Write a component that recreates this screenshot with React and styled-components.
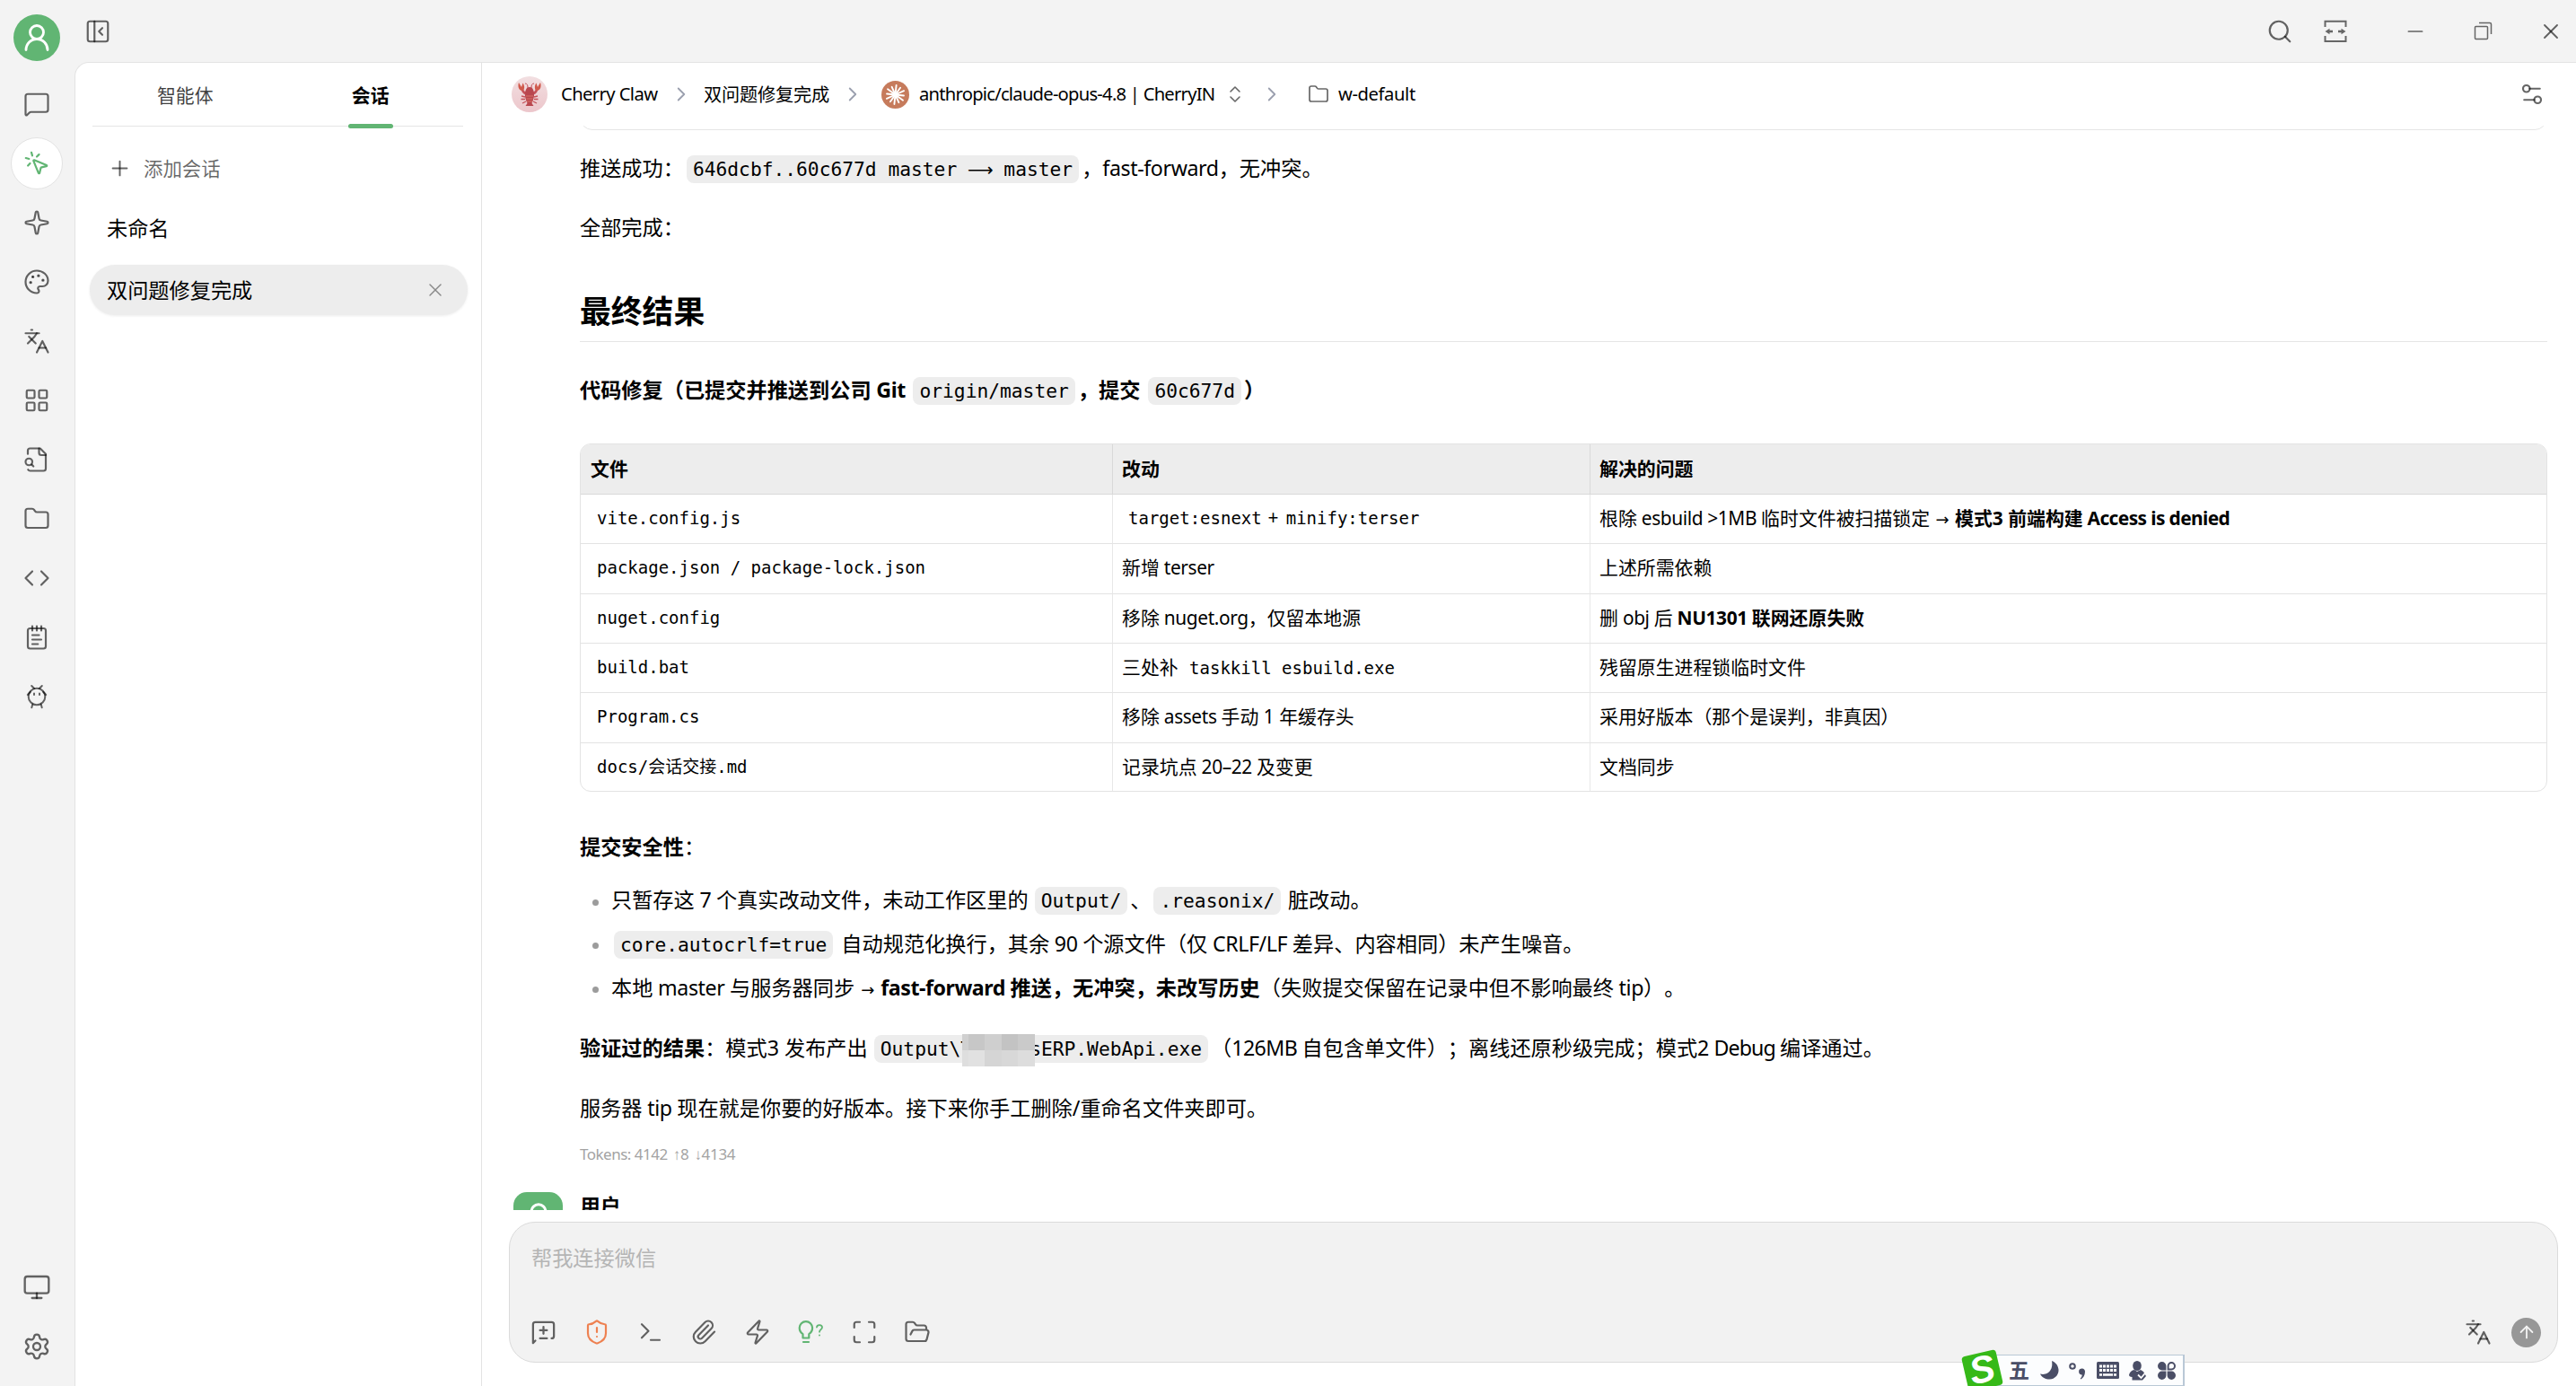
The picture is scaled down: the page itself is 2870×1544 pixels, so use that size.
import React from 'react';
import styled, { createGlobalStyle, css } from 'styled-components';
import {
  MessageSquare, MousePointerClick, Sparkle, Palette, Languages, LayoutGrid, Folder, Code,
  NotepadText, Monitor, Settings, PanelLeftClose, Search, Minus, X, Plus, ChevronRight,
  ChevronsUpDown, Settings2, ShieldAlert, Terminal, Paperclip, Zap, Maximize, FolderOpen,
  ArrowUp, UserRound,
} from 'lucide-react';

const sans = `'Noto Sans', 'Noto Sans CJK SC', sans-serif`;
const mono = `'DejaVu Sans Mono', 'Noto Sans CJK SC', monospace`;
const ink = 'rgba(0, 0, 0, 0.6)';
const green = '#61b573';

const GlobalStyle = createGlobalStyle`
  * { box-sizing: border-box; }
  body {
    margin: 0;
    background: #f3f3f3;
    color: #000;
    font-family: ${sans};
    font-size: 23.2px;
    text-spacing-trim: space-all;
    overflow: hidden;
  }
  svg { display: block; flex: none; }
`;

/* ---------- shell ---------- */

const Window = styled.div`
  position: relative;
  display: flex;
  width: 2870px;
  height: 1544px;
  overflow: hidden;
`;

const Rail = styled.nav`
  display: flex;
  flex-direction: column;
  align-items: center;
  width: 83px;
  padding: 16px 1px 7px 0;
`;

const RailAvatar = styled.div`
  display: flex;
  align-items: center;
  justify-content: center;
  width: 52px;
  height: 52px;
  margin-bottom: 19px;
  border-radius: 50%;
  background: ${green};
`;

const RailItem = styled.div`
  display: flex;
  align-items: center;
  justify-content: center;
  width: 58px;
  height: 58px;
  margin-bottom: 8px;
  border: 1px solid transparent;
  border-radius: 50%;
  ${props => props.$active && css`
    background: #fff;
    border-color: #e3e3e3;
  `}
`;

const RailSpacer = styled.div`
  flex: 1;
`;

const Workspace = styled.div`
  display: flex;
  flex-direction: column;
  flex: 1;
`;

const TitleBar = styled.header`
  display: flex;
  align-items: center;
  height: 69px;
  padding: 0 14px 0 11px;
`;

const TitleTools = styled.div`
  display: flex;
  align-items: center;
  gap: 34px;
  margin-left: auto;
`;

const WindowButtons = styled.div`
  display: grid;
  grid-template-columns: repeat(3, 28px);
  gap: 47.5px;
  place-items: center;
  margin-left: 28px;
`;

const Panel = styled.div`
  display: flex;
  flex: 1;
  border-top: 1px solid #e3e3e3;
  border-left: 1px solid #e3e3e3;
  border-top-left-radius: 16px;
  background: #fff;
  overflow: hidden;
`;

// nudges a label onto the optical centre of the icon beside it
const Label = styled.span`
  padding-bottom: 2px;
  letter-spacing: ${props => props.$ls || 0}px;
`;

/* ---------- session list ---------- */

const Sessions = styled.aside`
  display: flex;
  flex-direction: column;
  width: 453px;
  border-right: 1px solid #e3e3e3;
`;

const Tabs = styled.div`
  display: flex;
  height: 71px;
  margin: 0 20px 0 19px;
  border-bottom: 1px solid #e5e5e5;
`;

const Tab = styled.div`
  position: relative;
  display: flex;
  flex: 1;
  align-items: center;
  justify-content: center;
  font-size: 20.9px;
  color: ${props => (props.$active ? '#000' : 'rgba(0, 0, 0, 0.75)')};
  font-weight: ${props => (props.$active ? 700 : 400)};
  ${props => props.$active && css`
    &::after {
      content: '';
      position: absolute;
      bottom: -3px;
      width: 50px;
      height: 5px;
      border-radius: 3px;
      background: ${green};
    }
  `}
`;

const AddSession = styled.div`
  display: flex;
  align-items: center;
  gap: 13px;
  height: 56px;
  margin-top: 18px;
  padding-left: 36px;
  font-size: 21.4px;
  color: ${ink};
`;

const Session = styled.div`
  display: flex;
  align-items: center;
  justify-content: space-between;
  height: 56px;
  margin: ${props => props.$top}px 15px 0 16px;
  padding: 0 24px 0 19px;
  border-radius: 28px;
  ${props => props.$active && css`
    background: #ededed;
    box-shadow: 0 1px 3px rgba(0, 0, 0, 0.08);
  `}
`;

/* ---------- chat ---------- */

const Chat = styled.main`
  display: flex;
  flex-direction: column;
  flex: 1;
`;

const ChatHeader = styled.div`
  display: flex;
  align-items: center;
  height: 70px;
  padding: 0 34px 0 33px;
  font-size: 20.2px;
`;

const Crumb = styled.div`
  display: flex;
  align-items: center;
  white-space: nowrap;
  width: ${props => props.$w}px;
  gap: ${props => props.$gap || 0}px;
`;

const AgentAvatar = styled.div`
  display: flex;
  align-items: center;
  justify-content: center;
  width: 40px;
  height: 40px;
  border-radius: 50%;
  background: linear-gradient(#f2dfe1, #ecc6cb);
`;

const HeaderEnd = styled.div`
  margin-left: auto;
`;

const Messages = styled.div`
  height: 1208px;
  padding: 0 32px 0 109px;
  overflow: hidden;
`;

const PreviousBlock = styled.div`
  height: 40px;
  margin-top: -35px;
  border: 1px solid #e5e5e5;
  border-radius: 14px;
`;

const Para = styled.p`
  height: 38px;
  margin: ${props => props.$top}px 0 0;
  line-height: 38px;
  white-space: nowrap;
  font-weight: ${props => (props.$bold ? 700 : 400)};
`;

const Heading = styled.h2`
  height: 58px;
  margin: 51px 0 0;
  border-bottom: 1px solid #e5e5e5;
  font-size: 34.8px;
  line-height: 47px;
`;

// Latin runs are tracked separately from the CJK text around them
const En = styled.span`
  letter-spacing: ${props => props.$ls ?? -0.4}px;
`;

const Mono = styled.code`
  padding: 3px 7px;
  margin: 0 3px;
  border-radius: 8px;
  background: #ededed;
  font-family: ${mono};
  font-size: 21.26px;
  font-weight: 400;
`;

const LongArrow = styled.span`
  display: inline-flex;
  justify-content: center;
  width: 26.6px;
  font-family: 'DejaVu Sans', sans-serif;
  font-size: 20px;
  line-height: 20px;
`;

const Arrow = styled.span`
  display: inline-block;
  width: 17px;
  font-family: 'DejaVu Sans', sans-serif;
  font-size: 18px;
  font-weight: 400;
  line-height: 20px;
  text-align: center;
`;

const Table = styled.div`
  display: grid;
  grid-template-columns: 593px 532px 1fr;
  grid-template-rows: 56px repeat(6, 55.33px);
  height: 388px;
  margin-top: 41px;
  border: 1px solid #e3e3e3;
  border-radius: 12px;
  overflow: hidden;
`;

const Cell = styled.div`
  display: flex;
  align-items: center;
  padding: 0 0 4px ${props => (props.$col ? 10 : 11)}px;
  border-right: ${props => (props.$col === 2 ? 'none' : '1px solid #e8e8e8')};
  border-bottom: ${props => (props.$lastRow ? 'none' : '1px solid #e3e3e3')};
  font-size: 20.9px;
  white-space: pre;
  ${props => props.$head && css`
    background: #ededed;
    border-color: #d9d9d9;
    font-weight: 700;
  `}
`;

const CellMono = styled.code`
  padding-left: ${props => (props.$flush ? 0 : 7)}px;
  font-family: ${mono};
  font-size: 19px;
`;

const List = styled.ul`
  display: flex;
  flex-direction: column;
  gap: 10.7px;
  margin: 22px 0 0;
  padding: 0;
  list-style: none;
`;

const Item = styled.li`
  display: flex;
  align-items: center;
  height: 38px;
  line-height: 38px;
  white-space: pre;
  &::before {
    content: '';
    flex: none;
    width: 7px;
    height: 7px;
    margin: 4px 14px 0;
    border-radius: 50%;
    background: #9c9c9c;
  }
`;

const Redacted = styled.span`
  position: relative;
  display: inline-block;
  width: 64px;
  height: 20px;
  vertical-align: middle;
`;

const Mosaic = styled.span`
  position: absolute;
  left: -11px;
  top: -8px;
  display: grid;
  grid-template-columns: 7px 18px 19px 18px 19px;
  grid-template-rows: 18px 18px;
`;

const MosaicCell = styled.i`
  background: ${props => props.$c};
`;

const Tokens = styled.div`
  display: flex;
  gap: 6px;
  height: 26px;
  margin-top: 20px;
  font-size: 17px;
  line-height: 26px;
  color: #a3a3a3;
`;

const TokenArrow = styled.span`
  font-family: 'Liberation Sans', sans-serif;
`;

const NextMessage = styled.div`
  display: flex;
  gap: 19px;
  margin: 29px 0 0 -74px;
  font-size: 22.8px;
  font-weight: 700;
  line-height: 32px;
`;

const MessageAvatar = styled.div`
  display: flex;
  justify-content: center;
  width: 55px;
  height: 55px;
  padding-top: 9px;
  border-radius: 15px;
  background: ${green};
`;

/* ---------- composer ---------- */

const Composer = styled.div`
  display: flex;
  flex-direction: column;
  justify-content: space-between;
  height: 157px;
  margin: 13px 20px 0 30px;
  padding: 19px 18px 17px 24px;
  border: 1px solid #dbdbdb;
  border-radius: 29px;
  background: #f2f2f2;
`;

const Placeholder = styled.div`
  line-height: 40px;
  color: #b5b5b5;
`;

const Tools = styled.div`
  display: flex;
  align-items: center;
  gap: 29.5px;
  height: 32px;
  margin-left: -2.5px;
`;

const SendGroup = styled.div`
  display: flex;
  align-items: center;
  gap: 22px;
  margin-left: auto;
`;

const Send = styled.div`
  display: flex;
  align-items: center;
  justify-content: center;
  width: 33px;
  height: 33px;
  border-radius: 50%;
  background: #979797;
`;

/* ---------- input method bar floating above the window ---------- */

const ImeBar = styled.div`
  position: absolute;
  left: 2205px;
  top: 1509px;
  display: flex;
  align-items: center;
  gap: 11.6px;
  width: 229px;
  height: 35px;
  padding-left: 33px;
  border: 1px solid #b9c8d6;
  border-width: 1px 2px 1px 0;
  background: #fcfdfe;
  color: #4a4e66;
`;

const ImeMode = styled.span`
  width: 23px;
  font-size: 23px;
  font-weight: 700;
  line-height: 28px;
  padding-bottom: 2px;
`;

const ImeLogo = styled.div`
  position: absolute;
  left: -16px;
  top: -3px;
  width: 39px;
  height: 40px;
  border-radius: 4px;
  background: #36b918;
  color: #fff;
  font: italic 700 42px/38px 'Liberation Sans', sans-serif;
  text-align: center;
  transform: rotate(-13deg);
`;

/* ---------- drawings ---------- */

const line = { fill: 'none', stroke: ink, strokeLinecap: 'round', strokeLinejoin: 'round' };

const FileLookup = () => (
  <svg width="30" height="30" viewBox="0 0 24 24" strokeWidth="1.75" {...line}>
    <path d="M14 2v4a2 2 0 0 0 2 2h4" />
    <path d="M4.268 21a2 2 0 0 0 1.727 1H18a2 2 0 0 0 2-2V7l-5-5H6a2 2 0 0 0-2 2v3" />
    <path d="m9 18-1.5-1.5" />
    <circle cx="5" cy="14" r="3" />
  </svg>
);

const ClawBot = () => (
  <svg width="30" height="30" viewBox="0 0 30 30" strokeWidth="2" {...line}>
    <circle cx="15" cy="15" r="9.3" />
    <path d="M9.2 3l3 3M20.800 3l-3 3M4.800 13l3-3.200M25.200 13l-3-3.200M10.300 23.500l-1 3.800M19.700 23.500l1 3.800" />
    <path d="M12 11.500v1.500M18 11.500v1.500" />
  </svg>
);

const ColumnWidth = () => (
  <svg width="26" height="26" viewBox="0 0 26 26" fill="none" stroke="#666" strokeWidth="2">
    <path d="M1.500 8V1.800h23V8M1.500 18v6h23v-6" />
    <path d="M4 13h6M16 13h6" strokeWidth="2.600" />
    <path d="M1.500 13l5-3.200v6.400zM24.500 13l-5-3.200v6.400z" fill="#666" stroke="none" />
  </svg>
);

const Restore = () => (
  <svg width="21" height="21" viewBox="0 0 21 21" fill="none" stroke="#666" strokeWidth="1.500">
    <rect x="1.500" y="5.500" width="14" height="14" rx="1" />
    <path d="M6 1.500h12a1.500 1.500 0 0 1 1.500 1.500v11" />
  </svg>
);

const MessageDiff = () => (
  <svg width="31" height="31" viewBox="0 0 24 24" strokeWidth="1.75" {...line}>
    <path d="m5 19-2 2V5a2 2 0 0 1 2-2h14a2 2 0 0 1 2 2v10a2 2 0 0 1-2 2" />
    <path d="M9 10h6M12 7v6M9 17h6" />
  </svg>
);

const BulbQuestion = () => (
  <svg width="30" height="30" viewBox="0 0 30 30" {...line} stroke={green} strokeWidth="2.2">
    <path d="M6.500 21.500v-4.300C4 15.500 2.700 13 2.700 10.300a7.200 7.200 0 0 1 14.400 0c0 2.700-1.300 5.200-3.800 6.900v4.300z" />
    <path d="M7 26h6" />
    <path d="M22 9.500c.3-3.400 6-3 6 .2 0 2.300-3 2.600-3 5M25 18.300v.2" strokeWidth="1.800" />
  </svg>
);

const Lobster = () => (
  <svg width="26" height="28" viewBox="0 0 26 28" fill="none" stroke="#c4525a">
    <path d="M5 8c0 4 3 5 6 6M21 8c0 4-3 5-6 6" strokeWidth="2.600" />
    <path d="M11 7c0-3-.5-5-3-5M15 7c0-3 .5-5 3-5" strokeWidth="1" />
    <path d="M8 17l-4-1M8 19.500H3.500M9 22l-4 2M18 17l4-1M18 19.500h4.500M17 22l4 2" strokeWidth="1.300" />
    <path d="M1 1c-1.500 4 0 9 4 9 3-1 2.500-6 .5-8.500L4 6zM25 1c1.500 4 0 9-4 9-3-1-2.500-6-.5-8.500L22 6z" fill="#d05a4c" stroke="none" />
    <path d="M13 6c4 0 5.500 5 5 10-.3 3-1.500 6-2.500 8l2 3h-9l2-3c-1-2-2.200-5-2.500-8C7.500 11 9 6 13 6z" fill="#b9474f" stroke="none" />
    <path d="M9 16h8M9.500 19h7M10 22h6" stroke="#da7366" strokeWidth="1" />
  </svg>
);

const Burst = () => (
  <svg width="31" height="31" viewBox="-15.500 -15.500 31 31">
    <circle r="15.500" fill="#c67b5c" />
    {[...Array(12)].map((_, i) => (
      <path key={i} d={`M0 0V${i % 2 ? -9.5 : -10.5}`} transform={`rotate(${i * 30 + 6})`} stroke="#fff" strokeWidth="1.900" strokeLinecap="round" />
    ))}
  </svg>
);

const Moon = () => (
  <svg width="21" height="21" viewBox="0 0 21 21" fill="currentColor">
    <path d="M13 0c5 2 7.500 6 7.500 10.500C20.500 16 16 20.500 10.500 20.500 6 20.500 2 18.500 0 14.500c7 2 15-3 13-14.500z" />
  </svg>
);

const Punctuation = () => (
  <svg width="19" height="21" viewBox="0 0 19 21">
    <circle cx="4" cy="6" r="2.800" fill="none" stroke="currentColor" strokeWidth="2" />
    <path d="M14.500 8.500a3.300 3.300 0 0 1 3.500 3.500c0 4-2 7-4.500 8.500l-.8-.8c1.300-1.200 2-2.500 2-4.200a3.500 3.500 0 0 1-.2-7z" fill="currentColor" />
  </svg>
);

const Keyboard = () => (
  <svg width="25" height="19" viewBox="0 0 25 19">
    <rect width="25" height="19" rx="1.500" fill="currentColor" />
    <path d="M3 5h19M3 9.500h19" stroke="#fff" strokeWidth="3" strokeDasharray="3 1" />
    <path d="M3 14.500h3M7 14.500h11M19 14.500h3" stroke="#fff" strokeWidth="2.500" />
  </svg>
);

const Person = () => (
  <svg width="20" height="22" viewBox="0 0 20 22" fill="currentColor">
    <ellipse cx="9" cy="5.500" rx="4.800" ry="5.500" />
    <path d="M6 10l3 2 4-2 3 2 3 5-4 4.500H3.500V18C1 18 0 17 0 15.500 1 12 3 10.500 6 10z" />
    <path d="M10 15.500l3.500 3.500 5-6" fill="none" stroke="#fff" strokeWidth="1.800" />
  </svg>
);

const Clover = () => (
  <svg width="20" height="20" viewBox="0 0 20 20" fill="currentColor">
    <path d="M9.400 9.400H4.700a4.700 4.700 0 1 1 4.700-4.700zM9.400 10.600v4.700a4.700 4.700 0 1 1-4.700-4.700zM10.600 10.600h4.700a4.700 4.700 0 1 1-4.700 4.700z" />
    <path d="M11.600 8.400V4.700a3.700 3.700 0 1 1 3.700 3.700z" fill="none" stroke="currentColor" strokeWidth="2" />
  </svg>
);

/* ---------- content ---------- */

const icon = { size: 30, strokeWidth: 1.75, color: ink };

const railIcons = [
  MessageSquare, MousePointerClick, Sparkle, Palette, Languages, LayoutGrid,
  FileLookup, Folder, Code, NotepadText, ClawBot,
];

const rows = [
  [
    <CellMono>vite.config.js</CellMono>,
    <><CellMono>target:esnext</CellMono><En $ls={1.4}> + </En><CellMono $flush>minify:terser</CellMono></>,
    <>根除<En> esbuild &gt;1MB </En>临时文件被扫描锁定 <Arrow>→</Arrow> <b>模式3 前端构建<En $ls={-0.6}> Access is denied</En></b></>,
  ],
  [<CellMono>package.json / package-lock.json</CellMono>, <>新增<En> terser</En></>, '上述所需依赖'],
  [
    <CellMono>nuget.config</CellMono>,
    <>移除<En> nuget.org</En>，仅留本地源</>,
    <>删<En> obj </En>后<b><En> NU1301 </En>联网还原失败</b></>,
  ],
  [<CellMono>build.bat</CellMono>, <>三处补 <CellMono>taskkill esbuild.exe</CellMono></>, '残留原生进程锁临时文件'],
  [<CellMono>Program.cs</CellMono>, <>移除<En> assets </En>手动 1 年缓存头</>, '采用好版本（那个是误判，非真因）'],
  [<CellMono>docs/会话交接.md</CellMono>, <>记录坑点<En> 20–22 </En>及变更</>, '文档同步'],
];

const mosaic = [
  '#d0d0d0', '#c7c7c7', '#cfcfcf', '#c3c3c3', '#cacaca',
  '#dedede', '#e1e1e1', '#d5d5d5', '#d8d8d8', '#dddddd',
];

const Separator = () => <ChevronRight size={26} strokeWidth={1.7} color="#9a9fae" />;

const App = () => {
  return (
    <Window>
      <GlobalStyle />

      <Rail>
        <RailAvatar><UserRound size={36} strokeWidth={1.9} color="#fff" /></RailAvatar>
        {railIcons.map((Icon, i) => (
          <RailItem key={i} $active={i === 1}>
            <Icon {...icon} color={i === 1 ? green : ink} />
          </RailItem>
        ))}
        <RailSpacer />
        <RailItem><Monitor {...icon} size={32} /></RailItem>
        <RailItem><Settings {...icon} size={32} /></RailItem>
      </Rail>

      <Workspace>
        <TitleBar>
          <PanelLeftClose {...icon} />
          <TitleTools>
            <Search {...icon} />
            <ColumnWidth />
            <WindowButtons>
              <Minus size={26} strokeWidth={1.6} color={ink} />
              <Restore />
              <X size={28} strokeWidth={1.6} color={ink} />
            </WindowButtons>
          </TitleTools>
        </TitleBar>

        <Panel>
          <Sessions>
            <Tabs>
              <Tab>智能体</Tab>
              <Tab $active>会话</Tab>
            </Tabs>
            <AddSession>
              <Plus size={27} strokeWidth={1.75} color={ink} />
              <Label>添加会话</Label>
            </AddSession>
            <Session $top={11}><Label>未命名</Label></Session>
            <Session $active $top={13}>
              <Label>双问题修复完成</Label>
              <X size={24} strokeWidth={1.4} color="#888" />
            </Session>
          </Sessions>

          <Chat>
            <ChatHeader>
              <Crumb $w={176} $gap={15}>
                <AgentAvatar><Lobster /></AgentAvatar>
                <Label $ls={-0.6}>Cherry Claw</Label>
              </Crumb>
              <Crumb $w={38}><Separator /></Crumb>
              <Crumb $w={153}><Label $ls={-0.2}>双问题修复完成</Label></Crumb>
              <Crumb $w={45}><Separator /></Crumb>
              <Crumb $w={422} $gap={11}>
                <Burst />
                <Label $ls={-0.76}>anthropic/claude-opus-4.8 | CherryIN</Label>
                <ChevronsUpDown size={24} strokeWidth={1.6} color={ink} />
              </Crumb>
              <Crumb $w={53}><Separator /></Crumb>
              <Crumb $gap={10}>
                <Folder size={24} strokeWidth={1.7} color={ink} />
                <Label $ls={-0.4}>w-default</Label>
              </Crumb>
              <HeaderEnd><Settings2 size={30} strokeWidth={1.75} color={ink} /></HeaderEnd>
            </ChatHeader>

            <Messages>
              <PreviousBlock />
              <Para $top={23}>
                推送成功：<Mono>646dcbf..60c677d master <LongArrow>⟶</LongArrow> master</Mono>，<En>fast-forward</En>，无冲突。
              </Para>
              <Para $top={28}>全部完成：</Para>
              <Heading>最终结果</Heading>
              <Para $top={34} $bold>
                代码修复（已提交并推送到公司<En> Git </En><Mono>origin/master</Mono>，提交 <Mono>60c677d</Mono>）
              </Para>

              <Table>
                {['文件', '改动', '解决的问题'].map((name, i) => (
                  <Cell key={name} $head $col={i}>{name}</Cell>
                ))}
                {rows.map((row, r) => row.map((cell, c) => (
                  <Cell key={`${r}-${c}`} $lastRow={r === 5} $col={c}>
                    <span>{cell}</span>
                  </Cell>
                )))}
              </Table>

              <Para $top={42}><b>提交安全性</b>：</Para>
              <List>
                <Item>
                  <span>只暂存这<En> 7 </En>个真实改动文件，未动工作区里的<En $ls={-2}> </En><Mono>Output/</Mono>、<Mono>.reasonix/</Mono><En $ls={-1.5}> </En>脏改动。</span>
                </Item>
                <Item>
                  <span><Mono>core.autocrlf=true</Mono> 自动规范化换行，其余<En> 90 </En>个源文件（仅<En> CRLF/LF </En>差异、内容相同）未产生噪音。</span>
                </Item>
                <Item>
                  <span>本地<En> master </En>与服务器同步 <Arrow>→</Arrow> <b><En $ls={-0.45}>fast-forward </En>推送，无冲突，未改写历史</b>（失败提交保留在记录中但不影响最终<En> tip</En>）。</span>
                </Item>
              </List>
              <Para $top={29}>
                <b>验证过的结果</b>：模式3 发布产出<En $ls={-2}> </En><Mono>Output\T<Redacted>
                  <Mosaic>{mosaic.map((c, i) => <MosaicCell key={i} $c={c} />)}</Mosaic>
                </Redacted>sERP.WebApi.exe</Mono>（<En $ls={-0.6}>126MB </En>自包含单文件）；离线还原秒级完成；模式2<En $ls={-0.9}> Debug </En>编译通过。
              </Para>
              <Para $top={29}>服务器<En> tip </En>现在就是你要的好版本。接下来你手工删除/重命名文件夹即可。</Para>
              <Tokens>
                <En $ls={-0.5}>Tokens: 4142</En>
                <En $ls={-0.3}><TokenArrow>↑</TokenArrow>8</En>
                <En $ls={-0.3}><TokenArrow>↓</TokenArrow>4134</En>
              </Tokens>
              <NextMessage>
                <MessageAvatar><UserRound size={38} strokeWidth={1.9} color="#fff" /></MessageAvatar>
                用户
              </NextMessage>
            </Messages>

            <Composer>
              <Placeholder>帮我连接微信</Placeholder>
              <Tools>
                <MessageDiff />
                <ShieldAlert {...icon} color="#ee8151" />
                <Terminal {...icon} />
                <Paperclip {...icon} />
                <Zap {...icon} />
                <BulbQuestion />
                <Maximize {...icon} />
                <FolderOpen {...icon} />
                <SendGroup>
                  <Languages {...icon} />
                  <Send><ArrowUp size={22} strokeWidth={2} color="#f2f2f2" /></Send>
                </SendGroup>
              </Tools>
            </Composer>
          </Chat>
        </Panel>
      </Workspace>

      <ImeBar>
        <ImeLogo>S</ImeLogo>
        <ImeMode>五</ImeMode>
        <Moon />
        <Punctuation />
        <Keyboard />
        <Person />
        <Clover />
      </ImeBar>
    </Window>
  );
};

export default App;
